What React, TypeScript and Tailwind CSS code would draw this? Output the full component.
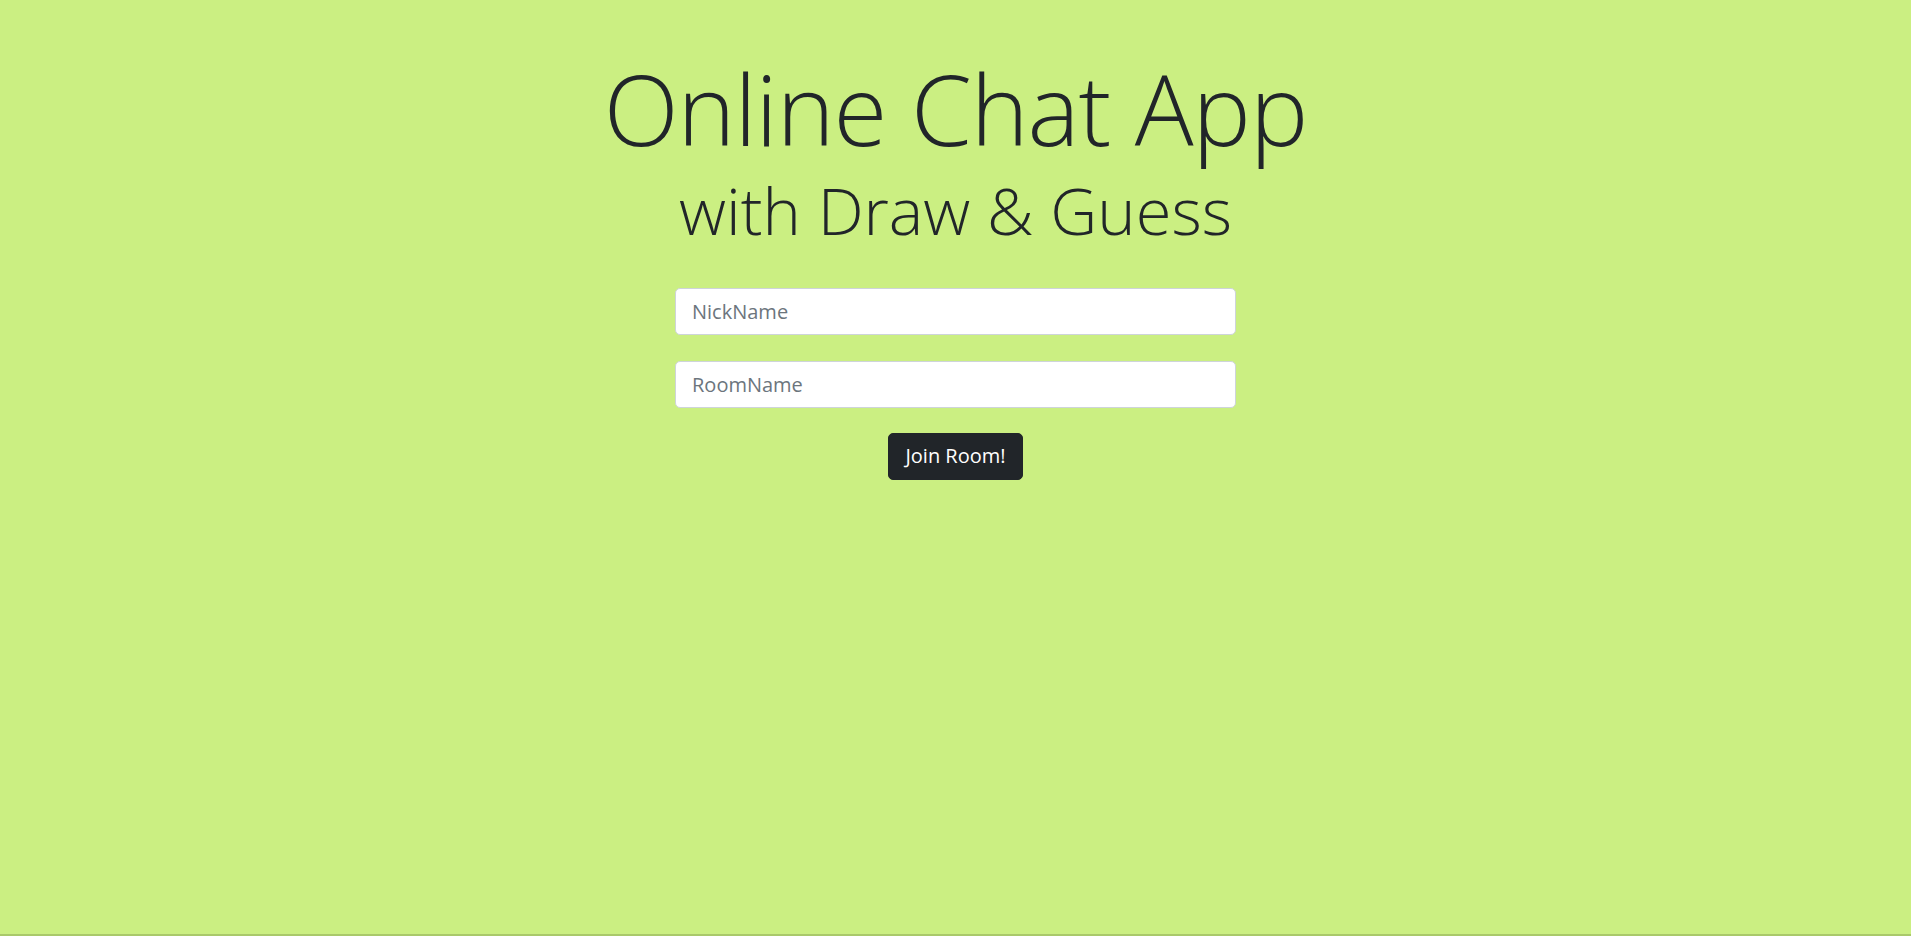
export default function App() {
  return (
    <div
      className="flex min-h-[936px] flex-col items-center border-b-2 border-[#a9c96a] bg-[#cbef82] text-[#212529]"
      style={{ fontFamily: '"Open Sans", "Noto Sans", Arial, sans-serif' }}
    >
      <h1 className="mt-[50px] text-[98px] font-light leading-[1.2] tracking-[-1px]">Online Chat App</h1>
      <h2 className="mt-[3px] text-[65px] font-light leading-[1.2]">with Draw &amp; Guess</h2>

      <form className="mt-[39px] flex w-[561px] flex-col items-center" onSubmit={(e) => e.preventDefault()}>
        <input
          type="text"
          placeholder="NickName"
          className="h-[47px] w-full rounded-[5px] border border-[#ced4da] bg-white px-4 text-[20px] text-[#495057] placeholder:text-[#6c757d] outline-none"
        />
        <input
          type="text"
          placeholder="RoomName"
          className="mt-[26px] h-[47px] w-full rounded-[5px] border border-[#ced4da] bg-white px-4 text-[20px] text-[#495057] placeholder:text-[#6c757d] outline-none"
        />
        <button
          type="submit"
          className="mt-[25px] h-[47px] rounded-[5px] border border-[#212529] bg-[#212529] px-4 text-[20px] text-white"
        >
          Join Room!
        </button>
      </form>
    </div>
  );
}
